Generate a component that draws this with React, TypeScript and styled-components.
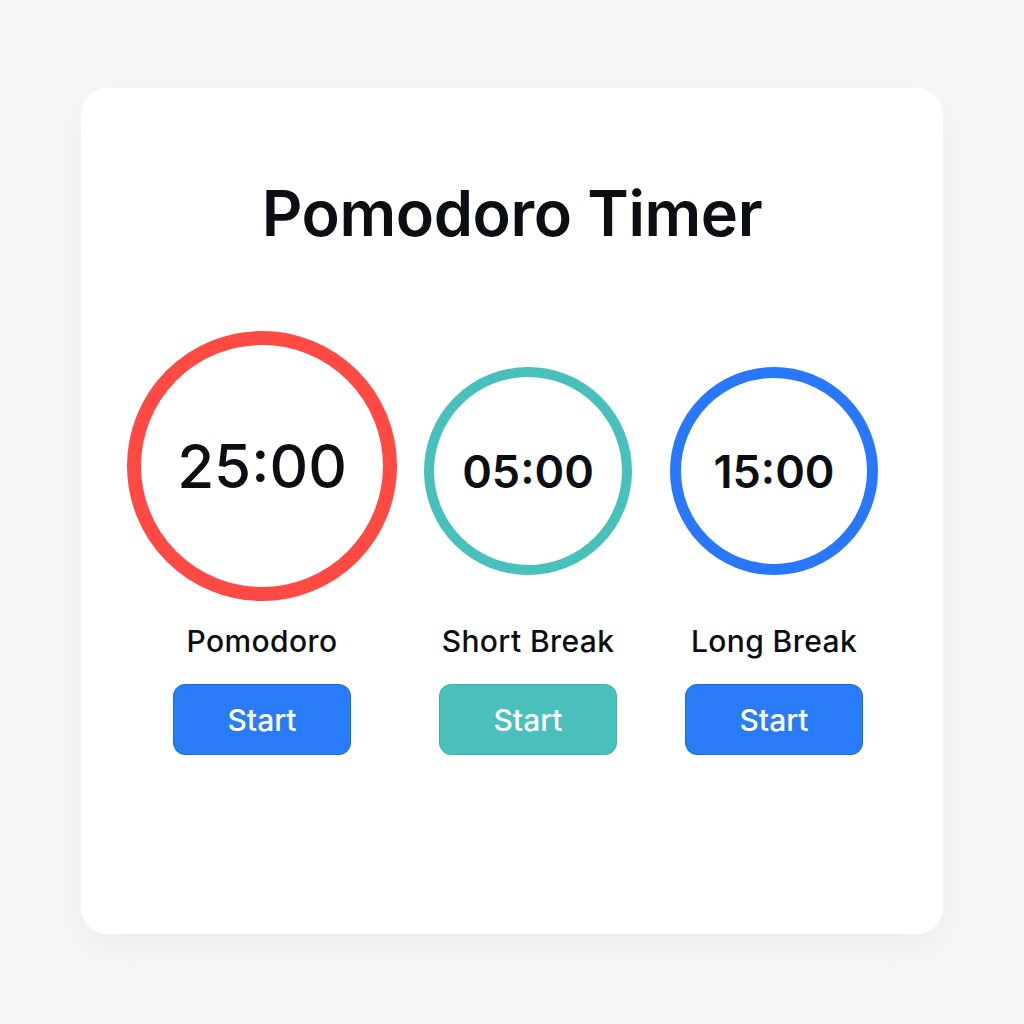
import { FC } from "react";
import styled, { createGlobalStyle } from "styled-components";

const GlobalStyle = createGlobalStyle`
  html, body {
    margin: 0;
    padding: 0;
    background: #f7f7f9;
    font-family: Inter, "Noto Sans", sans-serif;
    color: #0b0f14;
  }
`;

type TimerInfo = {
  label: string;
  time: string;
  ring: string;
  button: string;
  buttonBorder: string;
  size: number;
  stroke: number;
  offset: number;
  fontSize: number;
  weight: number;
};

const timers: TimerInfo[] = [
  {
    label: "Pomodoro",
    time: "25:00",
    ring: "#ff4a43",
    button: "#2a7bf7",
    buttonBorder: "#1f6ae8",
    size: 270,
    stroke: 14,
    offset: 0,
    fontSize: 60,
    weight: 500,
  },
  {
    label: "Short Break",
    time: "05:00",
    ring: "#48c0bc",
    button: "#4ac0bd",
    buttonBorder: "#3bb3ae",
    size: 208,
    stroke: 10,
    offset: 36,
    fontSize: 45,
    weight: 600,
  },
  {
    label: "Long Break",
    time: "15:00",
    ring: "#2978fb",
    button: "#2a7bf7",
    buttonBorder: "#1f6ae8",
    size: 208,
    stroke: 11,
    offset: 36,
    fontSize: 45,
    weight: 600,
  },
];

const App: FC = () => {
  return (
    <Page>
      <GlobalStyle />
      <Card>
        <Title>Pomodoro Timer</Title>
        <Timers>
          {timers.map((t) => (
            <Column key={t.label}>
              <RingSlot>
                <Ring
                  $size={t.size}
                  $stroke={t.stroke}
                  $color={t.ring}
                  $offset={t.offset}
                >
                  <Time $fontSize={t.fontSize} $weight={t.weight}>
                    {t.time}
                  </Time>
                </Ring>
              </RingSlot>
              <Label>{t.label}</Label>
              <StartButton $bg={t.button} $border={t.buttonBorder}>
                Start
              </StartButton>
            </Column>
          ))}
        </Timers>
      </Card>
    </Page>
  );
};

export default App;

const Page = styled.div`
  width: 1024px;
  height: 1024px;
  padding-top: 88px;
  box-sizing: border-box;
  display: flex;
  justify-content: center;
`;

const Card = styled.div`
  width: 862px;
  height: 846px;
  background: #ffffff;
  border-radius: 26px;
  box-shadow: 0 12px 40px rgba(0, 0, 0, 0.05);
  box-sizing: border-box;
  padding-top: 86px;
  display: flex;
  flex-direction: column;
  align-items: center;
`;

const Title = styled.h1`
  margin: 0;
  font-size: 63px;
  line-height: 79px;
  font-weight: 600;
  letter-spacing: -0.4px;
`;

const Timers = styled.div`
  display: flex;
  align-items: flex-start;
  gap: 27px;
  margin-top: 78px;
  margin-right: 19px;
`;

const Column = styled.div`
  display: flex;
  flex-direction: column;
  align-items: center;

  &:last-child {
    margin-left: 11px;
  }
`;

const RingSlot = styled.div`
  height: 270px;
  display: flex;
  align-items: flex-start;
`;

const Ring = styled.div<{
  $size: number;
  $stroke: number;
  $color: string;
  $offset: number;
}>`
  margin-top: ${(p) => p.$offset}px;
  width: ${(p) => p.$size}px;
  height: ${(p) => p.$size}px;
  border: ${(p) => p.$stroke}px solid ${(p) => p.$color};
  border-radius: 50%;
  box-sizing: border-box;
  display: flex;
  align-items: center;
  justify-content: center;
`;

const Time = styled.span<{ $fontSize: number; $weight: number }>`
  font-size: ${(p) => p.$fontSize}px;
  font-weight: ${(p) => p.$weight};
`;

const Label = styled.div`
  margin-top: 22px;
  font-size: 30px;
  line-height: 36px;
  font-weight: 500;
  letter-spacing: 0.4px;
  white-space: nowrap;
`;

const StartButton = styled.button<{ $bg: string; $border: string }>`
  margin-top: 25px;
  width: 178px;
  height: 71px;
  background: ${(p) => p.$bg};
  border: 1px solid ${(p) => p.$border};
  border-radius: 12px;
  color: #ffffff;
  font-family: Inter, "Noto Sans", sans-serif;
  font-size: 30px;
  font-weight: 500;
  cursor: pointer;
`;
